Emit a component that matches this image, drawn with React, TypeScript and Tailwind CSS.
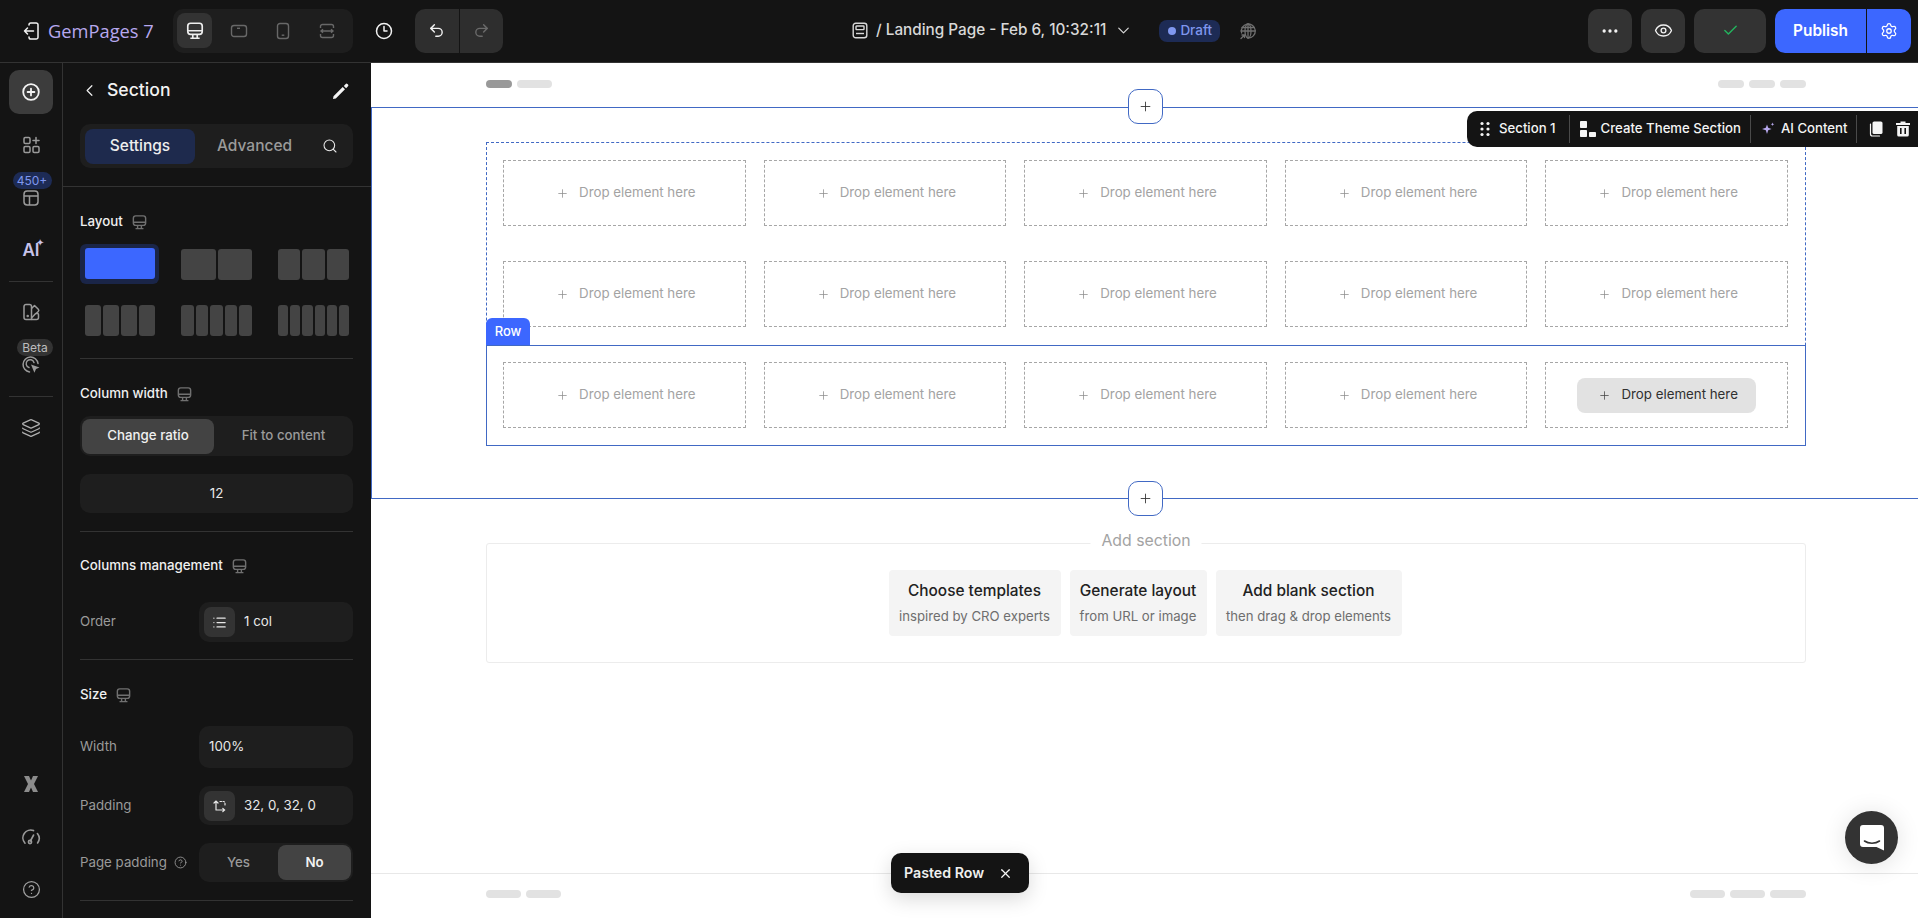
import React from "react";
import { ChevronLeft, Search, Clock3, Undo2, Redo2, Ellipsis, Eye, Check, Settings, ChevronDown, Plus, X, Layers, CircleHelp, List } from "lucide-react";

function Monitor({ className = "", size = 18 }: { className?: string; size?: number }) {
  return (
    <svg width={size} height={size} viewBox="0 0 18 18" fill="none" stroke="currentColor" strokeWidth="1.5" className={className}>
      <rect x="2.5" y="2" width="13" height="10" rx="2.5" />
      <path d="M2.5 8.8h13M7 12v3.5M11 12v3.5M4.8 15.5h8.4" />
    </svg>
  );
}

function DeviceTablet() {
  return (
    <svg width="18" height="18" viewBox="0 0 18 18" fill="none" stroke="#686868" strokeWidth="1.4">
      <rect x="1.5" y="3.5" width="15" height="11" rx="2.5" />
      <path d="M7 6.3h3" />
    </svg>
  );
}
function DevicePhone() {
  return (
    <svg width="18" height="18" viewBox="0 0 18 18" fill="none" stroke="#686868" strokeWidth="1.4">
      <rect x="3.5" y="1.5" width="11" height="15" rx="2.5" />
      <path d="M7.7 13.2h2.6" />
    </svg>
  );
}
function DeviceExpand() {
  return (
    <svg width="18" height="18" viewBox="0 0 18 18" fill="none" stroke="#686868" strokeWidth="1.4">
      <path d="M2.5 6V4.5a2 2 0 0 1 2-2h9a2 2 0 0 1 2 2V6M2.5 12v1.5a2 2 0 0 0 2 2h9a2 2 0 0 0 2-2V12" />
      <path d="M3 9h12M5 7.2L3 9l2 1.8M13 7.2L15 9l-2 1.8" />
    </svg>
  );
}
function ExitIcon() {
  return (
    <svg width="16" height="18" viewBox="0 0 16 18" fill="none" stroke="#f2f2f2" strokeWidth="1.5" strokeLinecap="round" strokeLinejoin="round">
      <path d="M6 3V2.8A1.8 1.8 0 0 1 7.8 1h5.4A1.8 1.8 0 0 1 15 2.8v12.4a1.8 1.8 0 0 1-1.8 1.8H7.8A1.8 1.8 0 0 1 6 15.2V15" />
      <path d="M10.5 9H1.5M4.5 6l-3 3 3 3" />
    </svg>
  );
}
function AddCircle() {
  return (
    <svg width="22" height="22" viewBox="0 0 22 22" fill="none" stroke="#f2f2f2" strokeWidth="1.8" strokeLinecap="round">
      <circle cx="11" cy="11" r="7.8" />
      <path d="M11 7.6v6.8M7.6 11h6.8" />
    </svg>
  );
}
function ElementsIcon() {
  return (
    <svg width="22" height="22" viewBox="0 0 22 22" fill="none" stroke="#9a9a9a" strokeWidth="1.5" strokeLinecap="round">
      <rect x="4" y="3.5" width="6" height="6" rx="1.2" />
      <rect x="4" y="12.5" width="6" height="6" rx="1.2" />
      <rect x="13" y="12.5" width="6" height="6" rx="1.2" />
      <path d="M16 3.5v6M13 6.5h6" />
    </svg>
  );
}
function TemplateIcon() {
  return (
    <svg width="22" height="22" viewBox="0 0 22 22" fill="none" stroke="#9a9a9a" strokeWidth="1.5">
      <rect x="4" y="4" width="14" height="14" rx="3.2" />
      <path d="M4 9h14M9.5 9v9" />
    </svg>
  );
}
function ThemeIcon() {
  return (
    <svg width="22" height="22" viewBox="0 0 22 22" fill="none" stroke="#9a9a9a" strokeWidth="1.5" strokeLinejoin="round">
      <path d="M6 3.5h3.5a2 2 0 0 1 2 2v13H6a2 2 0 0 1-2-2v-11a2 2 0 0 1 2-2z" />
      <path d="M11.5 7.5l3-3 3.8 3.8a1.5 1.5 0 0 1 0 2.1l-2 2M11.5 18.5h5a2 2 0 0 0 2-2v-3a1 1 0 0 0-1-1h-1.8L11.5 17" />
      <circle cx="7.7" cy="15" r=".5" fill="#9a9a9a" />
    </svg>
  );
}
function TargetIcon() {
  return (
    <svg width="22" height="22" viewBox="0 0 22 22" fill="none" stroke="#9a9a9a" strokeWidth="1.5" strokeLinecap="round">
      <path d="M9.5 18A7.5 7.5 0 1 1 18 9.5" />
      <path d="M9 13.5A4 4 0 1 1 14 8.6" />
      <path d="M11 10.5l8.5 3-3.5 1.6-1.6 3.7z" fill="#9a9a9a" stroke="none" />
    </svg>
  );
}
function XLogo() {
  return (
    <svg width="16" height="16" viewBox="0 0 16 16" fill="#8c8c8c">
      <path d="M1 0h5l2 4.6L10 0h5l-4 8 4 8h-5l-2-4.6L6 16H1l4-8z" />
    </svg>
  );
}
function GaugeIcon() {
  return (
    <svg width="22" height="22" viewBox="0 0 22 22" fill="none" stroke="#9a9a9a" strokeWidth="1.6" strokeLinecap="round">
      <path d="M5 17.2A7.8 7.8 0 0 1 13.5 4.6M17.4 7.5A7.8 7.8 0 0 1 17.6 17" />
      <path d="M10.4 15l3.2-6" />
      <circle cx="10" cy="16" r="1.6" />
    </svg>
  );
}
function PencilFill() {
  return (
    <svg width="20" height="20" viewBox="0 0 20 20" fill="#f5f5f5">
      <path d="M2.5 15.2L2 18l2.8-.5L14 8.3 11.7 6zM12.8 4.9l2.3 2.3 1.9-1.9a1.2 1.2 0 0 0 0-1.7l-.6-.6a1.2 1.2 0 0 0-1.7 0z" />
    </svg>
  );
}
function PaddingIcon() {
  return (
    <svg width="14" height="14" viewBox="0 0 14 14" fill="none" stroke="#e8e8e8" strokeWidth="1.2" strokeLinecap="round">
      <path d="M3 11V2M1 4l2-2 2 2M3 11h8.5M9.8 9.4l1.8 1.6-1.8 1.6" />
      <path d="M7 2.5h3.5a1.5 1.5 0 0 1 1.5 1.5v3" strokeDasharray="1.5 1.5" />
    </svg>
  );
}
function PageIcon() {
  return (
    <svg width="16" height="17" viewBox="0 0 16 17" fill="none" stroke="#d8d8d8" strokeWidth="1.4">
      <rect x="1.2" y="1.2" width="13.6" height="14.6" rx="2.5" />
      <rect x="4" y="4" width="8" height="3.6" rx=".6" />
      <path d="M4 11.5h8" />
    </svg>
  );
}
function GlobeIcon() {
  return (
    <svg width="18" height="18" viewBox="0 0 18 18" fill="none" stroke="#6f6f6f" strokeWidth="1.3" strokeLinecap="round">
      <path d="M2.6 11A7 7 0 1 1 9 16" />
      <ellipse cx="9" cy="9" rx="3" ry="7" />
      <path d="M2 9h14M3 5.5h12M9 2v14" />
      <path d="M2 16.5l3.5-3.5M3 13h2.5v2.5" />
    </svg>
  );
}
function ThemeGlyph() {
  return (
    <svg width="16" height="16" viewBox="0 0 16 16" fill="#f5f5f5">
      <rect x="0" y="0" width="7" height="7" rx=".8" />
      <rect x="0" y="9" width="7" height="7" rx=".8" />
      <rect x="9" y="11" width="7" height="5" rx=".8" />
    </svg>
  );
}
function GripIcon() {
  return (
    <svg width="10" height="16" viewBox="0 0 10 16" fill="#f5f5f5">
      <circle cx="2" cy="2.5" r="1.6" />
      <circle cx="8" cy="2.5" r="1.6" />
      <circle cx="2" cy="8" r="1.6" />
      <circle cx="8" cy="8" r="1.6" />
      <circle cx="2" cy="13.5" r="1.6" />
      <circle cx="8" cy="13.5" r="1.6" />
    </svg>
  );
}
function StarIcon() {
  return (
    <svg width="14" height="14" viewBox="0 0 14 14" fill="#b7a8ee">
      <path d="M6 2.5l1.2 3.3L10.5 7 7.2 8.2 6 12 4.8 8.2 1 7l3.8-1.2z" />
      <path d="M11.5 0.5l.5 1.3 1.3.5-1.3.5-.5 1.3-.5-1.3-1.3-.5 1.3-.5z" />
    </svg>
  );
}
function CopyIcon() {
  return (
    <svg width="16" height="16" viewBox="0 0 16 16" fill="none">
      <rect x="4.5" y="0.5" width="10" height="12.5" rx="1.6" fill="#f5f5f5" />
      <path d="M2.5 3v10a2 2 0 0 0 2 2h7" stroke="#f5f5f5" strokeWidth="1.2" strokeLinecap="round" />
    </svg>
  );
}
function TrashIcon() {
  return (
    <svg width="16" height="16" viewBox="0 0 16 16" fill="#f5f5f5">
      <path d="M5.5 0.5h5v1.6h4.5v1.8H1V2.1h4.5z" />
      <path fillRule="evenodd" d="M2.2 5h11.6v9a1.6 1.6 0 0 1-1.6 1.6H3.8A1.6 1.6 0 0 1 2.2 14zM5 7v6h1.6V7zm4.4 0v6H11V7z" />
    </svg>
  );
}
function ChatIcon() {
  return (
    <svg width="24" height="26" viewBox="0 0 24 26" fill="none">
      <path d="M3 0h18a3 3 0 0 1 3 3v22.5l-7.5-3.5H3a3 3 0 0 1-3-3V3a3 3 0 0 1 3-3z" fill="#fff" />
      <path d="M4.5 16c4 3 11 3 15 0" stroke="#333" strokeWidth="1.6" strokeLinecap="round" />
    </svg>
  );
}

function Drop({ active = false }: { active?: boolean }) {
  return (
    <div className="h-[66px] border border-dashed border-[#a6a6a6] flex items-center justify-center">
      <div className={active ? "flex items-center h-[35px] w-[179px] justify-center rounded-[8px] bg-[#e2e2e2] text-[#303030] pl-[3px]" : "flex items-center text-[#a3a3a3] pl-[3px]"}>
        <Plus size={13} strokeWidth={1.4} className={active ? "text-[#444]" : "text-[#8e8e8e]"} />
        <span className="ml-[10px] text-[13.3px] leading-[18px] mb-[2px]">Drop element here</span>
      </div>
    </div>
  );
}

function DropRow({ last = false }: { last?: boolean }) {
  return (
    <div className="grid grid-cols-5 gap-[18px]">
      <Drop />
      <Drop />
      <Drop />
      <Drop />
      <Drop active={last} />
    </div>
  );
}

function Label({ children }: { children: React.ReactNode }) {
  return (
    <div className="flex items-center gap-[8px] h-[20px] font-medium text-[#f0f0f0]">
      <span>{children}</span>
      <Monitor size={17} className="text-[#707070]" />
    </div>
  );
}

function Pieces({ n }: { n: number }) {
  return (
    <div className="flex gap-[2px] w-full h-[31px]">
      {Array.from({ length: n }).map((_, i) => (
        <div key={i} className="flex-1 rounded-[3px] bg-[#444444]" />
      ))}
    </div>
  );
}

function Skeleton({ w, dark = false }: { w: string; dark?: boolean }) {
  return <div className={`${w} h-[8px] rounded-full ${dark ? "bg-[#999999]" : "bg-[#e2e2e2]"}`} />;
}

function AddCard({ t, s, w }: { t: string; s: string; w: string }) {
  return (
    <div className={`${w} h-[66px] rounded-[4px] bg-[#f4f4f4] flex flex-col items-center pt-[10px]`}>
      <div className="text-[15.4px] leading-[22px] font-medium text-[#212121]">{t}</div>
      <div className="text-[13.2px] leading-[20px] mt-[4px] text-[#6e6e6e]">{s}</div>
    </div>
  );
}

function AddBtn({ className }: { className: string }) {
  return (
    <div className={`absolute left-[756px] w-[35px] h-[35px] rounded-[10px] bg-white border border-[#4169c4] flex items-center justify-center ${className}`}>
      <Plus size={15} strokeWidth={1.4} className="text-[#333]" />
    </div>
  );
}

export default function App() {
  return (
    <div className="w-[1918px] h-[918px] overflow-hidden flex flex-col bg-[#141414] font-['Inter',sans-serif]">
      {/* top bar */}
      <header className="h-[63px] shrink-0 border-b border-[#333] bg-[#141414] flex items-center pb-px">
        <div className="ml-[23px] flex items-center w-[150px]">
          <ExitIcon />
          <span className="ml-[9px] text-[18.3px] font-medium text-[#b7a8ee] font-['Open_Sans',sans-serif]">GemPages 7</span>
        </div>
        <div className="w-[180px] h-[44px] rounded-[10px] bg-[#1e1e1e] flex items-center pl-[4px] gap-[9px]">
          <div className="w-[35px] h-[35px] rounded-[8px] bg-[#333] flex items-center justify-center"><Monitor size={20} className="text-[#eee]" /></div>
          <div className="w-[35px] flex justify-center"><DeviceTablet /></div>
          <div className="w-[35px] flex justify-center"><DevicePhone /></div>
          <div className="w-[35px] flex justify-center"><DeviceExpand /></div>
        </div>
        <Clock3 size={18} strokeWidth={2} className="ml-[22px] text-[#f2f2f2]" />
        <div className="ml-[22px] w-[88px] h-[44px] rounded-[10px] bg-[#2e2e2e] flex items-center">
          <div className="flex-1 h-full flex items-center justify-center border-r border-[#141414]"><Undo2 size={17} className="text-[#f2f2f2]" /></div>
          <div className="flex-1 flex justify-center"><Redo2 size={17} className="text-[#6a6a6a]" /></div>
        </div>
        <div className="ml-[349px] flex items-center">
          <PageIcon />
          <span className="ml-[8px] text-[15.3px] font-medium text-[#d8d8d8]">/ Landing Page - Feb 6, 10:32:11</span>
          <ChevronDown size={19} strokeWidth={1.5} className="ml-[8px] text-[#d8d8d8]" />
        </div>
        <div className="ml-[26px] w-[61px] h-[22px] rounded-[8px] bg-[#1d2b55] flex items-center pl-[9px] text-[13.5px] font-medium text-[#7f97ef]">
          <span className="w-[8px] h-[8px] rounded-full bg-[#7f97ef] mr-[4px]" />Draft
        </div>
        <div className="ml-[19px]"><GlobeIcon /></div>
        <div className="ml-auto mr-[7px] flex items-center">
          <div className="w-[44px] h-[44px] rounded-[10px] bg-[#333] flex items-center justify-center"><Ellipsis size={20} className="text-[#f2f2f2]" /></div>
          <div className="ml-[9px] w-[44px] h-[44px] rounded-[10px] bg-[#333] flex items-center justify-center"><Eye size={19} strokeWidth={1.7} className="text-[#f2f2f2]" /></div>
          <div className="ml-[9px] w-[72px] h-[44px] rounded-[10px] bg-[#333] flex items-center justify-center"><Check size={17} className="text-[#23b45e]" /></div>
          <div className="ml-[9px] w-[136px] h-[44px] rounded-[10px] bg-[#3c67ff] flex items-center">
            <div className="w-[92px] h-full flex items-center justify-center border-r border-[#141414] text-[15.4px] font-semibold text-white">Publish</div>
            <div className="flex-1 flex justify-center"><Settings size={18} strokeWidth={1.7} className="text-white" /></div>
          </div>
        </div>
      </header>

      <div className="flex-1 flex min-h-0">
        {/* rail */}
        <nav className="w-[63px] shrink-0 border-r border-[#333] flex flex-col items-center pt-[7px] pb-[19px] relative">
          <div className="w-[44px] h-[44px] rounded-[10px] bg-[#3c3c3c] flex items-center justify-center"><AddCircle /></div>
          <div className="mt-[20px]"><ElementsIcon /></div>
          <div className="mt-[16px] ml-[2px] z-10 w-[39px] h-[17px] rounded-full bg-[#1d2b55] text-[12px] leading-[17px] text-center text-[#7f97ef]">450+</div>
          <div className="mt-[-2px]"><TemplateIcon /></div>
          <div className="mt-[30px] h-[22px] flex items-start relative">
            <span className="text-[17px] leading-[22px] font-semibold text-[#c7c3ea]">AI</span>
            <span className="absolute left-[14px] top-[-4px] text-[10px] text-[#c7c3ea]">✦</span>
          </div>
          <div className="mt-[20px] w-[44px] h-px bg-[#333]" />
          <div className="mt-[19px]"><ThemeIcon /></div>
          <div className="mt-[16px] ml-[8px] z-10 w-[36px] h-[17px] rounded-full bg-[#333] text-[12px] leading-[17px] text-center text-[#bdbdbd]">Beta</div>
          <div className="mt-[-2px]"><TargetIcon /></div>
          <div className="mt-[20px] w-[44px] h-px bg-[#333]" />
          <Layers size={20} strokeWidth={1.5} className="mt-[21px] text-[#b0b0b0]" />
          <div className="mt-auto"><XLogo /></div>
          <div className="mt-[34px]"><GaugeIcon /></div>
          <CircleHelp size={19} strokeWidth={1.6} className="mt-[32px] text-[#a0a0a0]" />
        </nav>

        {/* settings */}
        <aside className="w-[308px] shrink-0 bg-[#141414] text-[13.3px]">
          <div className="h-[61px] flex items-center pl-[17px] pr-[18px] pb-[6px]">
            <ChevronLeft size={19} strokeWidth={1.5} className="text-[#f0f0f0]" />
            <span className="ml-[8px] text-[17.6px] font-medium text-[#f2f2f2]">Section</span>
            <div className="ml-auto mr-[2px]"><PencilFill /></div>
          </div>
          <div className="pl-[17px] pr-[18px] pb-[18px] border-b border-[#333]">
            <div className="h-[44px] rounded-[10px] bg-[#1e1e1e] flex items-center pl-[5px] text-[15.5px] font-medium">
              <div className="w-[110px] h-[35px] rounded-[8px] bg-[#1e2a4d] flex items-center justify-center text-[#eeeeee]">Settings</div>
              <span className="ml-[22px] text-[#9a9a9a]">Advanced</span>
              <Search size={16} strokeWidth={1.6} className="ml-[30px] text-[#e8e8e8]" />
            </div>
          </div>
          <div className="pl-[17px] pr-[18px]">
            <div className="mt-[25px]"><Label>Layout</Label></div>
            <div className="mt-[12px] flex items-center h-[40px]">
              <div className="w-[79px] h-[40px] rounded-[6px] bg-[#1a2548] pl-[5px] pr-[4px] pt-[4px]">
                <div className="h-[31px] rounded-[3px] bg-[#3c67ff]" />
              </div>
              <div className="ml-[22px] w-[71px]"><Pieces n={2} /></div>
              <div className="ml-[26px] w-[71px]"><Pieces n={3} /></div>
            </div>
            <div className="mt-[21px] flex items-center">
              <div className="ml-[5px] w-[70px]"><Pieces n={4} /></div>
              <div className="ml-[26px] w-[71px]"><Pieces n={5} /></div>
              <div className="ml-[26px] w-[71px]"><Pieces n={6} /></div>
            </div>
            <div className="mt-[22px] h-px bg-[#333]" />

            <div className="mt-[25px]"><Label>Column width</Label></div>
            <div className="mt-[12px] h-[40px] rounded-[10px] bg-[#1e1e1e] flex items-center pl-[2px]">
              <div className="w-[132px] h-[35px] rounded-[8px] bg-[#434343] flex items-center justify-center font-medium text-[#f0f0f0]">Change ratio</div>
              <div className="flex-1 text-center font-medium text-[#9a9a9a]">Fit to content</div>
            </div>
            <div className="mt-[18px] h-[39px] rounded-[10px] bg-[#1e1e1e] flex items-center justify-center text-[#e8e8e8]">12</div>
            <div className="mt-[18px] h-px bg-[#333]" />

            <div className="mt-[24px]"><Label>Columns management</Label></div>
            <div className="mt-[26px] flex items-center justify-between">
              <span className="text-[#9a9a9a]">Order</span>
              <div className="w-[154px] h-[40px] rounded-[10px] bg-[#1e1e1e] flex items-center pl-[5px]">
                <div className="w-[31px] h-[30px] rounded-[7px] bg-[#333] flex items-center justify-center"><List size={15} className="text-[#e8e8e8]" /></div>
                <span className="ml-[9px] text-[#e8e8e8]">1 col</span>
              </div>
            </div>
            <div className="mt-[17px] h-px bg-[#333]" />

            <div className="mt-[25px]"><Label>Size</Label></div>
            <div className="mt-[21px] flex items-center justify-between">
              <span className="text-[#9a9a9a]">Width</span>
              <div className="w-[154px] h-[42px] rounded-[10px] bg-[#1e1e1e] flex items-center pl-[10px] text-[#e8e8e8]">100%</div>
            </div>
            <div className="mt-[18px] flex items-center justify-between">
              <span className="text-[#9a9a9a]">Padding</span>
              <div className="w-[154px] h-[39px] rounded-[10px] bg-[#1e1e1e] flex items-center pl-[5px]">
                <div className="w-[31px] h-[30px] rounded-[7px] bg-[#333] flex items-center justify-center"><PaddingIcon /></div>
                <span className="ml-[9px] text-[#e8e8e8]">32, 0, 32, 0</span>
              </div>
            </div>
            <div className="mt-[18px] flex items-center justify-between">
              <span className="flex items-center gap-[7px] text-[#9a9a9a]">Page padding <CircleHelp size={13} strokeWidth={1.6} /></span>
              <div className="w-[154px] h-[39px] rounded-[10px] bg-[#1e1e1e] flex items-center pr-[2px]">
                <div className="flex-1 text-center font-medium text-[#9a9a9a]">Yes</div>
                <div className="w-[73px] h-[35px] rounded-[8px] bg-[#434343] flex items-center justify-center font-semibold text-[#f2f2f2]">No</div>
              </div>
            </div>
            <div className="mt-[18px] h-px bg-[#333]" />
          </div>
        </aside>

        {/* canvas */}
        <main className="flex-1 min-w-0 bg-white relative overflow-hidden flex flex-col">
          <div className="h-[44px] shrink-0 pt-[17px] pl-[115px] w-[1435px] flex gap-[5px]">
            <Skeleton w="w-[26px]" dark />
            <Skeleton w="w-[35px]" />
            <div className="ml-auto flex gap-[5px]">
              <Skeleton w="w-[26px]" />
              <Skeleton w="w-[26px]" />
              <Skeleton w="w-[26px]" />
            </div>
          </div>

          <section className="relative h-[392px] shrink-0 border-y border-l border-[#4169c4] pt-[34px] pl-[114px]">
            <AddBtn className="top-[-19px]" />
            <AddBtn className="bottom-[-18px]" />

            <div className="absolute right-0 top-[3px] w-[451px] h-[36px] rounded-l-[10px] bg-[#141414] flex items-center whitespace-nowrap text-[13.2px] font-medium text-[#f5f5f5] z-10">
              <div className="ml-[13px]"><GripIcon /></div>
              <span className="ml-[9px]">Section 1</span>
              <div className="ml-[13px] w-px h-[28px] bg-[#4a4a4a]" />
              <div className="ml-[10px]"><ThemeGlyph /></div>
              <span className="ml-[5px]">Create Theme Section</span>
              <div className="ml-[9px] w-px h-[28px] bg-[#4a4a4a]" />
              <div className="ml-[10px]"><StarIcon /></div>
              <span className="ml-[6px]">AI Content</span>
              <div className="ml-[8px] w-px h-[28px] bg-[#4a4a4a]" />
              <div className="ml-[11px]"><CopyIcon /></div>
              <div className="ml-[11px]"><TrashIcon /></div>
            </div>

            <div className="relative w-[1320px] border-t border-x border-dashed border-[#4169c4]">
              <div className="h-[101px] pt-[17px] pl-[16px] pr-[17px]"><DropRow /></div>
              <div className="h-[101px] pt-[17px] pl-[16px] pr-[17px]"><DropRow /></div>
              <div className="relative -mx-px h-[101px] border border-[#4169c4] pt-[16px] pl-[16px] pr-[17px]">
                <div className="absolute left-[-1px] top-[-28px] w-[44px] h-[27px] rounded-t-[6px] bg-[#3c67ff] flex items-center justify-center text-[13px] font-medium text-white">Row</div>
                <DropRow last />
              </div>
            </div>
          </section>

          <div className="relative ml-[115px] mt-[44px] w-[1320px] h-[120px] shrink-0 rounded-[3px] border border-[#ececec] pt-[26px] pr-[2px] flex justify-center gap-[9px]">
            <div className="absolute left-1/2 -translate-x-1/2 top-[-14px] bg-white px-[11px] text-[15.8px] leading-[22px] text-[#a3a3a3]">Add section</div>
            <AddCard t="Choose templates" s="inspired by CRO experts" w="w-[172px]" />
            <AddCard t="Generate layout" s="from URL or image" w="w-[137px]" />
            <AddCard t="Add blank section" s="then drag & drop elements" w="w-[186px]" />
          </div>

          <div className="mt-auto h-[45px] shrink-0 border-t border-[#e8e8e8] pt-[16px] pl-[115px] pr-[112px] flex gap-[5px]">
            <Skeleton w="w-[35px]" />
            <Skeleton w="w-[35px]" />
            <div className="ml-auto flex gap-[5px]">
              <Skeleton w="w-[35px]" />
              <Skeleton w="w-[35px]" />
              <Skeleton w="w-[36px]" />
            </div>
          </div>

          <div className="absolute left-[520px] top-[790px] w-[138px] h-[40px] rounded-[10px] bg-[#141414] shadow-[0_6px_20px_rgba(0,0,0,0.15)] flex items-center pl-[13px] text-[14.2px] font-semibold text-[#f0f0f0]">
            Pasted Row
            <X size={15} strokeWidth={2} className="ml-[14px] text-[#f5f5f5]" />
          </div>

          <div className="absolute left-[1474px] top-[748px] w-[53px] h-[53px] rounded-full bg-[#333] shadow-[0_2px_24px_rgba(0,0,0,0.12)] flex items-center justify-center">
            <ChatIcon />
          </div>
        </main>
      </div>
    </div>
  );
}
